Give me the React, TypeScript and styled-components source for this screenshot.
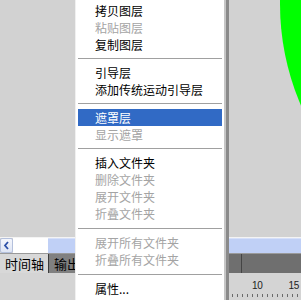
import React from 'react';
import styled, { createGlobalStyle } from 'styled-components';

const Global = createGlobalStyle`
  html, body {
    margin: 0;
    padding: 0;
    background: #d4d4d4;
  }
`;

const Page = styled.div`
  position: relative;
  width: 301px;
  height: 300px;
  display: flex;
  flex-direction: column;
  background: #d4d4d4;
  overflow: hidden;
  font-family: 'Noto Sans CJK SC', 'Liberation Sans', sans-serif;
`;

const Stage = styled.div`
  flex: 0 0 auto;
  height: 237px;
  background: #d2d2d2;
`;

const StageArt = styled.svg`
  display: block;
`;

const ScrollRow = styled.div`
  flex: 0 0 16px;
  display: flex;
  border-top: 1px solid #f4f4f4;
  box-sizing: border-box;
`;

const ArrowButton = styled.div`
  width: 13px;
  display: flex;
  align-items: center;
  justify-content: center;
  background: linear-gradient(#f4f6fc, #dfe5f4);
  border: 1px solid #b4c0dc;
  border-radius: 2px;
  box-sizing: border-box;
`;

const Track = styled.div`
  width: 35px;
  background: #ffffff;
`;

const Thumb = styled.div`
  flex: 1;
  background: #c0d0f6;
  border-top: 1px solid #d6e0fa;
`;

const TabBar = styled.div`
  flex: 0 0 19px;
  display: flex;
  background: #6f6f6f;
  border-top: 1px solid #9a9a9a;
  box-sizing: border-box;
`;

const Tab = styled.div<{ active?: boolean }>`
  display: flex;
  align-items: center;
  padding: 0 4px 0 5px;
  font-size: 13px;
  color: #000;
  background: ${({ active }) => (active ? '#d8d8d8' : '#808080')};
  border-left: ${({ active }) => (active ? 'none' : '1px solid #3c3c3c')};
`;

const Divider = styled.div`
  width: 1px;
  margin-left: 157px;
  background: #444;
`;

const Ruler = styled.div`
  flex: 1;
  display: flex;
  flex-direction: column;
  padding: 7px 0 0 252px;
  background: #d4d4d4;
`;

const RulerLabels = styled.div`
  display: flex;
  gap: 26px;
  font-family: 'Liberation Sans', sans-serif;
  font-size: 10px;
  line-height: 11px;
  letter-spacing: -0.3px;
  color: #222;
`;

const Ticks = styled.div`
  height: 3px;
  margin: 3px 0 0 -20px;
  background: repeating-linear-gradient(
    to right,
    #6a6a6a 0 1px,
    transparent 1px 5px
  );
`;

const Menu = styled.div`
  position: absolute;
  left: 75px;
  top: -1px;
  width: 151px;
  height: 310px;
  padding: 3px 2px;
  box-sizing: border-box;
  background: #ffffff;
  border-left: 1px solid #f0f0f0;
  border-right: 2px solid #c6c6c6;
  box-shadow: 3px 0 0 #8a8a8a;
`;

const Item = styled.div<{ disabled?: boolean; selected?: boolean }>`
  height: 17px;
  line-height: 17px;
  padding-left: 17px;
  font-size: 12px;
  white-space: nowrap;
  color: ${({ disabled, selected }) =>
    selected ? '#ffffff' : disabled ? '#a4a4a4' : '#000000'};
  background: ${({ selected }) => (selected ? '#316ac5' : 'transparent')};
`;

const Separator = styled.div<{ tall?: boolean }>`
  height: ${({ tall }) => (tall ? '12px' : '11px')};
  display: flex;
  align-items: center;
  &::after {
    content: '';
    flex: 1;
    height: 1px;
    background: #a0a0a0;
  }
`;

type Entry =
  | { label: string; disabled?: boolean; selected?: boolean }
  | { sep: true; tall?: boolean };

const entries: Entry[] = [
  { label: '拷贝图层' },
  { label: '粘贴图层', disabled: true },
  { label: '复制图层' },
  { sep: true },
  { label: '引导层' },
  { label: '添加传统运动引导层' },
  { sep: true },
  { label: '遮罩层', selected: true },
  { label: '显示遮罩', disabled: true },
  { sep: true },
  { label: '插入文件夹' },
  { label: '删除文件夹', disabled: true },
  { label: '展开文件夹', disabled: true },
  { label: '折叠文件夹', disabled: true },
  { sep: true, tall: true },
  { label: '展开所有文件夹', disabled: true },
  { label: '折叠所有文件夹', disabled: true },
  { sep: true, tall: true },
  { label: '属性...' },
];

export default function App() {
  return (
    <Page>
      <Global />
      <Stage>
        <StageArt width="301" height="237" viewBox="0 0 301 237">
          <circle cx="536" cy="4" r="256" fill="#00ff00" />
        </StageArt>
      </Stage>
      <ScrollRow>
        <ArrowButton>
          <svg width="7" height="9" viewBox="0 0 7 9">
            <path d="M5 1 L2 4.5 L5 8" fill="none" stroke="#2b4fa8" strokeWidth="1.8" />
          </svg>
        </ArrowButton>
        <Track />
        <Thumb />
      </ScrollRow>
      <TabBar>
        <Tab active>时间轴</Tab>
        <Tab>输出</Tab>
        <Divider />
      </TabBar>
      <Ruler>
        <RulerLabels>
          <span>10</span>
          <span>15</span>
        </RulerLabels>
        <Ticks />
      </Ruler>
      <Menu>
        {entries.map((e, i) =>
          'sep' in e ? (
            <Separator key={i} tall={e.tall} />
          ) : (
            <Item key={i} disabled={e.disabled} selected={e.selected}>
              {e.label}
            </Item>
          )
        )}
      </Menu>
    </Page>
  );
}
